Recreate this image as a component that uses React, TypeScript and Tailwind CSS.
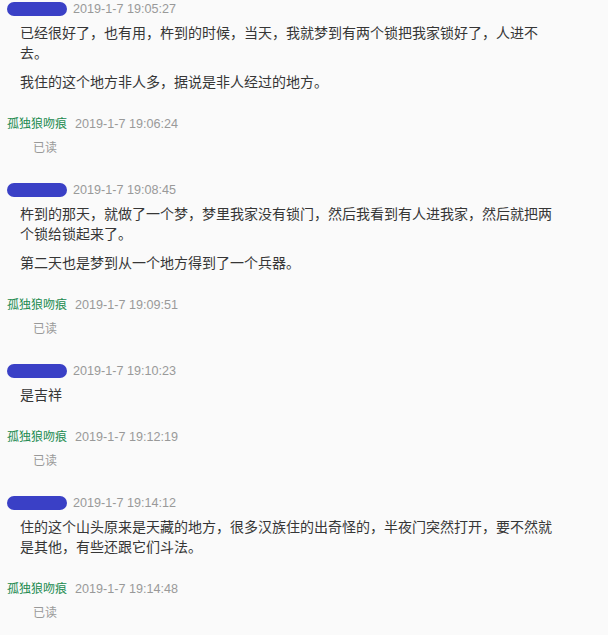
import React from 'react'

type Item =
  | { kind: 'other'; time: string; paragraphs: string[] }
  | { kind: 'me'; time: string }

const items: Item[] = [
  {
    kind: 'other',
    time: '2019-1-7 19:05:27',
    paragraphs: [
      '已经很好了，也有用，杵到的时候，当天，我就梦到有两个锁把我家锁好了，人进不去。',
      '我住的这个地方非人多，据说是非人经过的地方。',
    ],
  },
  { kind: 'me', time: '2019-1-7 19:06:24' },
  {
    kind: 'other',
    time: '2019-1-7 19:08:45',
    paragraphs: [
      '杵到的那天，就做了一个梦，梦里我家没有锁门，然后我看到有人进我家，然后就把两个锁给锁起来了。',
      '第二天也是梦到从一个地方得到了一个兵器。',
    ],
  },
  { kind: 'me', time: '2019-1-7 19:09:51' },
  { kind: 'other', time: '2019-1-7 19:10:23', paragraphs: ['是吉祥'] },
  { kind: 'me', time: '2019-1-7 19:12:19' },
  {
    kind: 'other',
    time: '2019-1-7 19:14:12',
    paragraphs: [
      '住的这个山头原来是天藏的地方，很多汉族住的出奇怪的，半夜门突然打开，要不然就是其他，有些还跟它们斗法。',
    ],
  },
  { kind: 'me', time: '2019-1-7 19:14:48' },
]

const font = { fontFamily: '"Liberation Sans", "Noto Sans CJK SC", sans-serif' }

export default function App() {
  return (
    <div className="w-[608px] h-[635px] bg-[#fafafa] overflow-hidden pl-[7px]" style={font}>
      <div className="flex flex-col gap-[23px]">
        {items.map((item, i) =>
          item.kind === 'other' ? (
            <div key={i}>
              <div className="flex items-center h-[18px] gap-[6px]">
                <span className="block w-[60px] h-[14px] rounded-full bg-[#3a40c6]"></span>
                <span className="text-[12.6px] leading-[18px] text-[#999]">{item.time}</span>
              </div>
              <div className="mt-[5px] pl-[13px] w-[553px] flex flex-col gap-[9px]">
                {item.paragraphs.map((p, j) => (
                  <p key={j} className="text-[14px] leading-[20px] text-[#363636]">
                    {p}
                  </p>
                ))}
              </div>
            </div>
          ) : (
            <div key={i}>
              <div className="flex items-center h-[18px] gap-[8px]">
                <span className="text-[12px] leading-[18px] text-[#218a4f]">孤独狼吻痕</span>
                <span className="text-[12.6px] leading-[18px] text-[#999]">{item.time}</span>
              </div>
              <div className="mt-[6px] pl-[26px] h-[19px] text-[12px] leading-[18px] text-[#999]">
                已读
              </div>
            </div>
          )
        )}
      </div>
    </div>
  )
}
